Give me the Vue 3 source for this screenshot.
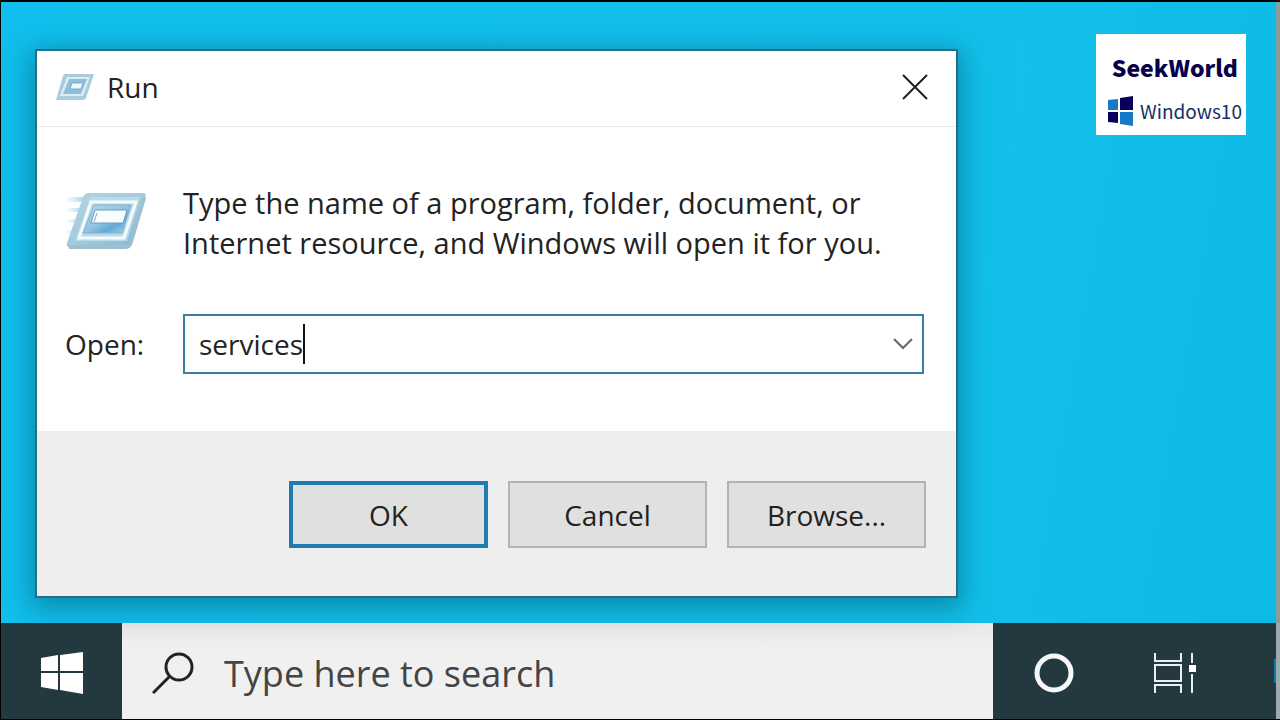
<template>
  <div class="screen">
    <main class="desktop">
      <form class="dialog" role="dialog" aria-labelledby="run-title" @submit.prevent>
        <header class="titlebar">
          <svg class="title-icon" viewBox="0 0 40 28" aria-hidden="true">
            <path d="M10 1H39L31 25Q30 27 28 27H1L8 3Q9 1 10 1Z" fill="#a9cbdd" />
            <path d="M12 4H35L28 23H5Z" fill="#d9edf5" />
            <path d="M14 6H32L26 21H8Z" fill="#8fbfdb" />
            <path d="M17 10H28L26 16H15Z" fill="#f2f9fc" stroke="#7da9c6" />
          </svg>
          <h1 id="run-title">Run</h1>
          <button class="close" type="button" aria-label="Close">
            <svg viewBox="0 0 26 26" aria-hidden="true">
              <path d="M1 1L25 25M25 1L1 25" fill="none" stroke="#222" stroke-width="2" />
            </svg>
          </button>
        </header>

        <section class="content">
          <svg class="run-icon" viewBox="0 0 82 58" aria-hidden="true">
            <defs>
              <linearGradient id="frame" x1="0" y1="0" x2="1" y2="1">
                <stop offset="0" stop-color="#b5d3e1" />
                <stop offset="0.5" stop-color="#a3cbdd" />
                <stop offset="1" stop-color="#86b6cf" />
              </linearGradient>
              <linearGradient id="panel" x1="0" y1="0" x2="1" y2="1">
                <stop offset="0" stop-color="#b9dbec" />
                <stop offset="0.5" stop-color="#8fc4e2" />
                <stop offset="0.7" stop-color="#61aad8" />
                <stop offset="1" stop-color="#b0ddf0" />
              </linearGradient>
              <linearGradient id="trail">
                <stop offset="0" stop-color="#a7d0e3" stop-opacity="0" />
                <stop offset="1" stop-color="#a7d0e3" />
              </linearGradient>
            </defs>
            <path
              d="M2 5H22V10H2ZM1 16H18V20H1ZM1 27H16V31H1ZM0 38H12V42H0ZM0 47H10V51H0Z"
              fill="url(#trail)"
            />
            <path d="M23 1H78Q82 1 80 6L67 51Q65 55 61 55H5Q1 55 2 51L18 5Q20 1 23 1Z" fill="url(#frame)" />
            <path d="M2 51L4 57H61Q66 57 68 50L81 6L79 4L65 50Q64 53 60 53H4Z" fill="#9fbfd0" />
            <path d="M25 5H75L62 49H10Z" fill="#b9dbe8" />
            <path d="M26 10H71L59 46H14Z" fill="none" stroke="#f4fbfd" stroke-width="3" />
            <path d="M29 13H66L57 41H18Z" fill="url(#panel)" stroke="#82b2cf" />
            <path d="M30 18H62L58 31H26Z" fill="#fafdfe" stroke="#6f9abb" />
            <path d="M32 21L29 30" fill="none" stroke="#8ba8bc" />
          </svg>
          <p>
            Type the name of a program, folder, document, or<br />
            Internet resource, and Windows will open it for you.
          </p>
          <label for="open">Open:</label>
          <div class="combo">
            <input id="open" v-model="command" type="text" autocomplete="off" spellcheck="false" />
            <span class="caret"></span>
            <button type="button" aria-label="Show history">
              <svg viewBox="0 0 20 12" aria-hidden="true">
                <path d="M1 1L10 10L19 1" fill="none" stroke="#666" stroke-width="2" />
              </svg>
            </button>
          </div>
        </section>

        <footer class="actions">
          <button
            v-for="action in actions"
            :key="action"
            :class="{ primary: action === 'OK' }"
            type="button"
          >
            {{ action }}
          </button>
        </footer>
      </form>

      <aside class="badge">
        <strong>SeekWorld</strong>
        <div class="brand">
          <svg viewBox="0 0 25 30" aria-hidden="true">
            <path d="M0 4L10 3V14H0ZM12 16H25V30L12 28Z" fill="#1879c9" />
            <path d="M12 2L25 0V14H12ZM0 16H10V27L0 26Z" fill="#08005b" />
          </svg>
          <span>Windows10</span>
        </div>
      </aside>
    </main>

    <nav class="taskbar" aria-label="Taskbar">
      <button class="start" type="button" aria-label="Start">
        <svg viewBox="0 0 42 42" aria-hidden="true">
          <path d="M0 6L17 3V19H0ZM19 3L42 0V19H19ZM0 21H17V38L0 35ZM19 21H42V42L19 38Z" fill="#fff" />
        </svg>
      </button>
      <label class="search">
        <svg viewBox="0 0 42 42" aria-hidden="true">
          <circle cx="27" cy="15" r="13" fill="none" stroke="#222" stroke-width="3" />
          <path d="M18 24L1 41" fill="none" stroke="#222" stroke-width="3" />
        </svg>
        <input type="text" placeholder="Type here to search" aria-label="Type here to search" />
      </label>
      <button class="tray" type="button" aria-label="Cortana">
        <svg class="cortana" viewBox="0 0 40 40" aria-hidden="true">
          <circle cx="20" cy="20" r="17" fill="none" stroke="#f5f9fa" stroke-width="5" />
        </svg>
      </button>
      <button class="tray" type="button" aria-label="Task View">
        <svg class="task-view" viewBox="0 0 42 40" aria-hidden="true">
          <path
            d="M1 0V8H27V0M1 12H27V28H1ZM1 40V32H27V40M38 0V10M38 21V40"
            fill="none"
            stroke="#e6f0f2"
            stroke-width="2"
          />
          <path d="M35 12H42V19H35Z" fill="#fff" />
        </svg>
      </button>
      <span class="next-app"></span>
    </nav>
  </div>
</template>

<script setup>
import { ref } from "vue";

const command = ref("services");
const actions = ["OK", "Cancel", "Browse..."];
</script>

<style>
body {
  margin: 0;
  background: #000;
}
</style>

<style scoped>
.screen {
  box-sizing: border-box;
  min-height: 100vh;
  display: flex;
  flex-direction: column;
  border: solid #000;
  border-width: 2px 0 1px 1px;
  font-family: "Open Sans", "Noto Sans", sans-serif;
  color: #222;
}
button,
input {
  box-sizing: border-box;
  font: inherit;
  color: inherit;
  border: 0;
  padding: 0;
  margin: 0;
  background: none;
  outline: none;
}
svg {
  display: block;
  flex: none;
}
.desktop {
  position: relative;
  flex: 1;
  border-right: 4px solid #8d9b9f;
  background: linear-gradient(100deg, #10bfed, #12c0ea 75%, #0db9e5);
}
.dialog {
  position: absolute;
  top: 47px;
  left: 34px;
  right: 318px;
  border: 2px solid #286e80;
  background: #fff;
  box-shadow: 0 6px 26px 4px rgba(0, 70, 90, 0.45);
  font-size: 28px;
}
.titlebar {
  box-sizing: border-box;
  display: flex;
  align-items: center;
  height: 76px;
  padding: 0 28px 4px 18px;
  border-bottom: 1px solid #ececec;
}
.title-icon {
  width: 40px;
  height: 28px;
}
h1 {
  flex: 1;
  margin: 0 0 0 12px;
  font-size: 28px;
  font-weight: 400;
}
.close svg {
  width: 26px;
  height: 26px;
}
.content {
  display: grid;
  grid-template-columns: 118px 1fr;
  align-items: center;
  row-gap: 51px;
  padding: 56px 32px 57px 28px;
}
.run-icon {
  width: 82px;
  height: 58px;
  margin-bottom: 4px;
}
.content p {
  margin: 0;
  font-size: 29px;
  line-height: 40px;
  white-space: nowrap;
}
.combo {
  display: flex;
  align-items: center;
  height: 56px;
  padding: 0 9px 0 14px;
  border: 2px solid #3a7fa3;
}
.combo input {
  field-sizing: content;
}
.caret {
  width: 2px;
  height: 40px;
  background: #111;
}
.combo button {
  margin-left: auto;
}
.combo svg {
  width: 20px;
  height: 12px;
}
.actions {
  display: flex;
  justify-content: flex-end;
  gap: 20px;
  padding: 50px 30px 48px;
  background: #eee;
}
.actions button {
  width: 199px;
  height: 67px;
  border: 2px solid #b3b3b3;
  background: #e0e0e0;
}
.actions .primary {
  border: 4px solid #207bb0;
}
.badge {
  position: absolute;
  top: 32px;
  right: 30px;
  box-sizing: border-box;
  width: 150px;
  height: 101px;
  padding: 17px 8px 0 12px;
  background: #fff;
}
.badge strong {
  display: block;
  font-family: "Noto Sans CJK SC", sans-serif;
  font-size: 23px;
  font-weight: 900;
  line-height: 32px;
  text-align: right;
  color: #08004b;
}
.brand {
  display: flex;
  align-items: center;
  gap: 7px;
  margin-top: 12px;
  font-family: "Noto Sans CJK SC", sans-serif;
  font-size: 19px;
  line-height: 32px;
  color: #152e68;
}
.brand svg {
  width: 25px;
  height: 30px;
}
.taskbar {
  display: flex;
  height: 96px;
  border-right: 4px solid #9eabae;
  background: #24383f;
}
.start,
.tray {
  display: grid;
  place-items: center;
  width: 121px;
  padding-top: 4px;
}
.start svg {
  width: 42px;
  height: 42px;
}
.search {
  flex: 1;
  display: flex;
  align-items: center;
  gap: 30px;
  padding: 4px 30px 0;
  background: linear-gradient(#e8e8e8, #f0f0f0 24px);
  font-size: 36px;
}
.search svg {
  width: 42px;
  height: 42px;
}
.search input {
  flex: 1;
  min-width: 0;
}
.search input::placeholder {
  color: #444;
  opacity: 1;
}
.cortana {
  width: 40px;
  height: 40px;
}
.task-view {
  width: 42px;
  height: 40px;
}
.next-app {
  width: 2px;
  height: 24px;
  margin: auto 0 auto 39px;
  background: #087fa8;
}
</style>
